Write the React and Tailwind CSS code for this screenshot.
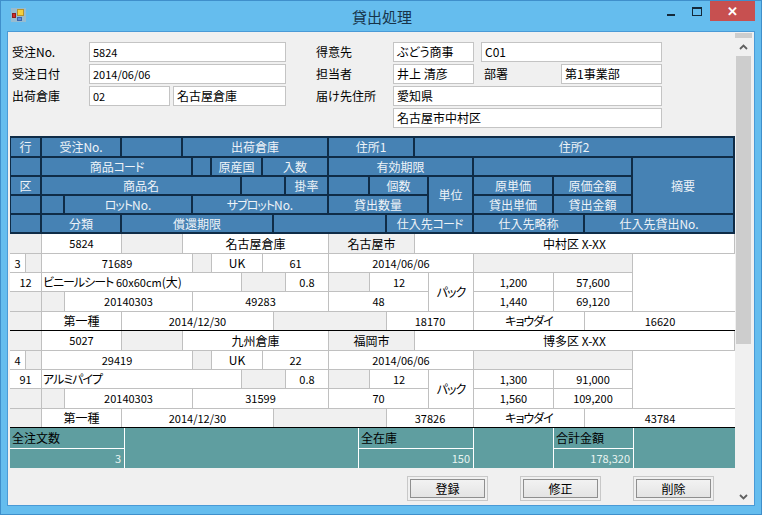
const FONT = "font-['Noto_Sans_CJK_JP','Liberation_Sans',sans-serif]"
const COLS = 'grid-cols-[16px_16px_23px_57px_61px_10px_19px_30px_21px_11px_12px_43px_41px_17px_28px_14px_45px_80px_31px_48px_102px]'

// digits are half width in the reference, so plain numbers get a smaller size
const textSize = (v) => (/^[\d.,/]+$/.test(String(v)) ? 'text-[11px]' : 'text-[12px]')

// katakana is proportional in the reference, about 9px a character
function Kana({ children }) {
  return <span className="tracking-[-1px] [font-feature-settings:'palt']">{children}</span>
}

// column lines: 1:10 2:26 3:42 4:65 5:122 6:183 7:193 8:212 9:242 10:263 11:274 12:286
// 13:329 14:370 15:387 16:415 17:429 18:474 19:554 20:585 21:633 22:735
const HEADER = [
  ['行', 'col-[1/3] row-[1] border-l'],
  ['受注No.', 'col-[3/5] row-[1]'],
  ['', 'col-[5/6] row-[1]'],
  ['出荷倉庫', 'col-[6/13] row-[1]'],
  ['住所1', 'col-[13/16] row-[1]'],
  ['住所2', 'col-[16/22] row-[1]'],

  ['', 'col-[1/3] row-[2] border-l'],
  [<>商品<Kana>コード</Kana></>, 'col-[3/7] row-[2]'],
  ['', 'col-[7/8] row-[2]'],
  ['原産国', 'col-[8/10] row-[2]'],
  ['入数', 'col-[10/13] row-[2]'],
  ['有効期限', 'col-[13/18] row-[2]'],
  ['', 'col-[18/21] row-[2]'],
  ['摘要', 'col-[21/22] row-[2/5]'],

  ['区', 'col-[1/3] row-[3] border-l'],
  ['商品名', 'col-[3/9] row-[3]'],
  ['', 'col-[9/12] row-[3]'],
  ['掛率', 'col-[12/13] row-[3]'],
  ['', 'col-[13/14] row-[3]'],
  ['個数', 'col-[14/17] row-[3]'],
  ['単位', 'col-[17/18] row-[3/5]'],
  ['原単価', 'col-[18/19] row-[3]'],
  ['原価金額', 'col-[19/21] row-[3]'],

  ['', 'col-[1/3] row-[4] border-l'],
  ['', 'col-[3/4] row-[4]'],
  [<><Kana>ロット</Kana>No.</>, 'col-[4/7] row-[4]'],
  [<><Kana>サブロット</Kana>No.</>, 'col-[7/13] row-[4]'],
  ['貸出数量', 'col-[13/17] row-[4]'],
  ['貸出単価', 'col-[18/19] row-[4]'],
  ['貸出金額', 'col-[19/21] row-[4]'],

  ['', 'col-[1/3] row-[5] border-l'],
  ['分類', 'col-[3/5] row-[5]'],
  ['償還期限', 'col-[5/11] row-[5]'],
  ['', 'col-[11/15] row-[5]'],
  [<>仕入先<Kana>コード</Kana></>, 'col-[15/18] row-[5]'],
  ['仕入先略称', 'col-[18/20] row-[5]'],
  ['仕入先貸出No.', 'col-[20/22] row-[5]'],
]

const ORDERS = [
  {
    no: '5824', wh: '名古屋倉庫', addr1: '名古屋市', addr2: '中村区 X-XX', line: '3', code: '71689', unitCount: '61',
    qty: '12', name: <><Kana>ビニールシート</Kana> <span className="text-[11px]">60x60cm</span>(大)</>, kubun: '12', lot: '20140303', sub: '49283', lend: '48',
    cost: '1,200', costSum: '57,600', price: '1,440', priceSum: '69,120', sup: '18170', supNo: '16620',
  },
  {
    no: '5027', wh: '九州倉庫', addr1: '福岡市', addr2: '博多区 X-XX', line: '4', code: '29419', unitCount: '22',
    qty: '12', name: <Kana>アルミパイプ</Kana>, kubun: '91', lot: '20140303', sub: '31599', lend: '70',
    cost: '1,300', costSum: '91,000', price: '1,560', priceSum: '109,200', sup: '37826', supNo: '43784',
  },
]

function Input({ className = '', children }) {
  return (
    <div className={`h-5 border border-[#c4c4c4] bg-white px-[3px] leading-[18px] text-black whitespace-nowrap ${textSize(children)} ${className}`}>
      {children}
    </div>
  )
}

function Label({ className = '', children }) {
  return <div className={`h-5 text-[12px] leading-5 text-black whitespace-nowrap ${className}`}>{children}</div>
}

function Cell({ className = '', gray, left, children }) {
  return (
    <div
      className={`flex items-center border-r border-b border-[#c0c0c0] text-black whitespace-pre ${textSize(children)} ${left ? 'justify-start pl-px' : 'justify-center'} ${gray ? 'bg-[#f0f0f0]' : 'bg-white'} ${className}`}
    >
      {children}
    </div>
  )
}

function OrderRows({ o }) {
  return (
    <div className={`grid ${COLS} grid-rows-[20px_19px_19px_20px_18px] border-b border-black`}>
      <Cell gray className="col-[1/3] row-[1]" />
      <Cell className="col-[3/5] row-[1]">{o.no}</Cell>
      <Cell gray className="col-[5/6] row-[1]" />
      <Cell className="col-[6/13] row-[1]">{o.wh}</Cell>
      <Cell gray className="col-[13/16] row-[1]">{o.addr1}</Cell>
      <Cell className="col-[16/22] row-[1]">{o.addr2}</Cell>

      <Cell className="col-[1/2] row-[2]">{o.line}</Cell>
      <Cell gray className="col-[2/3] row-[2]" />
      <Cell className="col-[3/7] row-[2]">{o.code}</Cell>
      <Cell gray className="col-[7/8] row-[2]" />
      <Cell className="col-[8/10] row-[2]">UK</Cell>
      <Cell className="col-[10/13] row-[2]">{o.unitCount}</Cell>
      <Cell className="col-[13/18] row-[2]">2014/06/06</Cell>
      <Cell gray className="col-[18/21] row-[2]" />
      <div className="col-[21/22] row-[2/5] bg-white border-b border-[#c0c0c0]" />

      <Cell className="col-[1/3] row-[3]">{o.kubun}</Cell>
      <Cell left className="col-[3/9] row-[3]"><span>{o.name}</span></Cell>
      <Cell gray className="col-[9/12] row-[3]" />
      <Cell className="col-[12/13] row-[3]">0.8</Cell>
      <Cell gray className="col-[13/14] row-[3]" />
      <Cell className="col-[14/17] row-[3]">{o.qty}</Cell>
      <Cell className="col-[17/18] row-[3/5]"><Kana>パック</Kana></Cell>
      <Cell className="col-[18/19] row-[3]">{o.cost}</Cell>
      <Cell className="col-[19/21] row-[3]">{o.costSum}</Cell>

      <Cell gray className="col-[1/3] row-[4]" />
      <Cell gray className="col-[3/4] row-[4]" />
      <Cell className="col-[4/7] row-[4]">{o.lot}</Cell>
      <Cell className="col-[7/13] row-[4]">{o.sub}</Cell>
      <Cell className="col-[13/17] row-[4]">{o.lend}</Cell>
      <Cell className="col-[18/19] row-[4]">{o.price}</Cell>
      <Cell className="col-[19/21] row-[4]">{o.priceSum}</Cell>

      <Cell gray className="col-[1/3] row-[5] border-b-0" />
      <Cell className="col-[3/5] row-[5] border-b-0">第一種</Cell>
      <Cell className="col-[5/11] row-[5] border-b-0">2014/12/30</Cell>
      <Cell gray className="col-[11/15] row-[5] border-b-0" />
      <Cell className="col-[15/18] row-[5] border-b-0">{o.sup}</Cell>
      <Cell className="col-[18/20] row-[5] border-b-0"><Kana>キョウダイ</Kana></Cell>
      <Cell className="col-[20/22] row-[5] border-b-0 border-r-0">{o.supNo}</Cell>
    </div>
  )
}

function Summary({ label, value, className }) {
  return (
    <div className={`flex flex-col border-r border-white ${className}`}>
      <div className="h-[21px] border-b border-white pl-[2px] text-[12px] leading-[19px] text-black">{label}</div>
      <div className="h-[19px] pr-[3px] text-right text-[11px] leading-[19px] text-[#e8f4f0]">{value}</div>
    </div>
  )
}

function ActionButton({ children }) {
  return (
    <button className="h-[25px] w-[81px] border border-[#c8c8c8] p-[2px]">
      <div className="flex h-full w-full items-center justify-center border border-[#8f8f8f] bg-gradient-to-b from-[#f2f2f2] to-[#e4e4e4] text-[12px] text-black">
        {children}
      </div>
    </button>
  )
}

function AppIcon() {
  return (
    <svg width="15" height="14" viewBox="0 0 15 14" className="block">
      <rect width="15" height="14" fill="#a9bcc6" opacity="0.75" />
      <rect x="6.5" y="1.5" width="6" height="6" fill="#f4d03f" stroke="#b8932a" />
      <rect x="1.5" y="5.5" width="3" height="4" fill="#d22b2b" stroke="#8c1f1f" />
      <rect x="6.5" y="9.5" width="4" height="3" fill="#5a8fe0" stroke="#3c65ad" />
    </svg>
  )
}

export default function App() {
  return (
    <div className={`${FONT} flex h-[515px] w-[762px] flex-col overflow-hidden border border-[#3f8fcb] bg-[#65bdee]`}>
      {/* title bar */}
      <div className="flex h-[30px] shrink-0 items-start">
        <div className="ml-[10px] mt-[7px]"><AppIcon /></div>
        <div className="flex-1 pl-[326px] pt-[5px] text-[15px] leading-[22px] text-[#17344a]">貸出処理</div>
        <div className="flex h-5 items-center pr-[8px]">
          <div className="mr-[17px] mt-[8px] h-[2px] w-[8px] bg-[#14293a]" />
          <div className="h-[9px] w-[10px] border border-t-2 border-[#14293a]" />
        </div>
        <div className="mr-[6px] flex h-[20px] w-[45px] items-center justify-center bg-[#c75050] text-[13px] font-bold text-white">✕</div>
      </div>

      {/* client area */}
      <div className="mx-[6px] flex h-[475px] border border-[#4a9ad6] bg-[#f0f0f0]">
        <div className="w-[727px] shrink-0 pl-[2px]">
          {/* form */}
          <div className="flex h-[104px] pt-[10px]">
            <div className="w-[303px] pl-[2px]">
              <div className="flex h-[22px] items-start"><Label className="w-[77px]">受注No.</Label><Input className="w-[197px]">5824</Input></div>
              <div className="flex h-[22px] items-start"><Label className="w-[77px]">受注日付</Label><Input className="w-[197px]">2014/06/06</Input></div>
              <div className="flex h-[22px] items-start">
                <Label className="w-[77px]">出荷倉庫</Label>
                <Input className="w-[81px]">02</Input>
                <Input className="ml-[3px] w-[113px]">名古屋倉庫</Input>
              </div>
            </div>
            <div className="pl-[3px]">
              <div className="flex h-[22px] items-start">
                <Label className="w-[77px]">得意先</Label>
                <Input className="w-[81px] [font-feature-settings:'palt']">ぶどう商事</Input>
                <Input className="ml-[7px] w-[181px]">C01</Input>
              </div>
              <div className="flex h-[22px] items-start">
                <Label className="w-[77px]">担当者</Label>
                <Input className="w-[81px]">井上 清彦</Input>
                <Label className="ml-[10px] w-[77px]">部署</Label>
                <Input className="w-[101px]">第1事業部</Input>
              </div>
              <div className="flex h-[22px] items-start"><Label className="w-[77px]">届け先住所</Label><Input className="w-[269px]">愛知県</Input></div>
              <div className="flex h-[22px] items-start pl-[77px]"><Input className="w-[269px]">名古屋市中村区</Input></div>
            </div>
          </div>

          {/* header */}
          <div className={`grid ${COLS} grid-rows-[20px_19px_19px_19px_19px] border-t-2 border-[#0f2c47]`}>
            {HEADER.map(([text, pos], i) => (
              <div
                key={i}
                className={`flex items-center justify-center border-r-2 border-b-2 border-[#0f2c47] bg-[#4682b4] text-[12px] text-[#eef3f8] whitespace-nowrap ${pos}`}
              >
                <span>{text}</span>
              </div>
            ))}
          </div>

          {/* rows */}
          {ORDERS.map((o) => <OrderRows key={o.no} o={o} />)}

          {/* totals */}
          <div className="flex h-10 bg-[#5f9ea0]">
            <Summary label="全注文数" value="3" className="w-[115px]" />
            <div className="w-[234px] border-r border-white" />
            <Summary label="全在庫" value="150" className="w-[115px]" />
            <div className="w-[80px] border-r border-white" />
            <Summary label="合計金額" value="178,320" className="w-[80px]" />
          </div>

          {/* buttons */}
          <div className="flex gap-[32px] pl-[397px] pt-[8px]">
            <ActionButton>登録</ActionButton>
            <ActionButton>修正</ActionButton>
            <ActionButton>削除</ActionButton>
          </div>
        </div>

        {/* scrollbar */}
        <div className="flex w-[17px] shrink-0 flex-col pt-[1px]">
          <div className="h-[5px] bg-[#cdcdcd]" />
          <div className="flex h-[18px] items-center justify-center text-[#606060]">
            <svg width="9" height="6" viewBox="0 0 9 6" fill="none" stroke="currentColor" strokeWidth="1.8"><path d="M1 5l3.5-3.5L8 5" /></svg>
          </div>
          <div className="ml-px h-[288px] w-[15px] bg-[#cdcdcd]" />
          <div className="flex-1" />
          <div className="flex h-[17px] items-center justify-center text-[#606060]">
            <svg width="9" height="6" viewBox="0 0 9 6" fill="none" stroke="currentColor" strokeWidth="1.8"><path d="M1 1l3.5 3.5L8 1" /></svg>
          </div>
        </div>
      </div>
    </div>
  )
}
